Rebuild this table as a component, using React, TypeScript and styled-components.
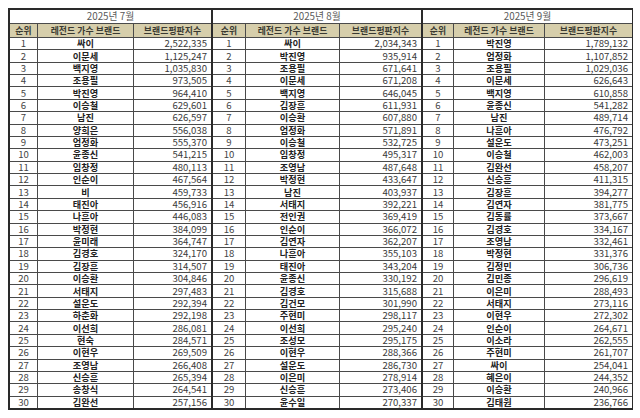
import React from "react";
import styled, { createGlobalStyle } from "styled-components";

interface IEntry {
  name: string;
  score: string;
}

interface IMonth {
  cols: string;
  entries: IEntry[];
  title: string;
  width: number;
}

const toEntries = (raw: string): IEntry[] =>
  raw
    .trim()
    .split("\n")
    .map((line: string): IEntry => {
      const [name, score] = line.trim().split(" ");
      return { name, score };
    });

const months: IMonth[] = [
  {
    cols: "27px 95px 1fr",
    entries: toEntries(`
      싸이 2,522,335
      이문세 1,125,247
      백지영 1,035,830
      조용필 973,505
      박진영 964,410
      이승철 629,601
      남진 626,597
      양희은 556,038
      엄정화 555,370
      윤종신 541,215
      임창정 480,113
      인순이 467,564
      비 459,733
      태진아 456,916
      나훈아 446,083
      박정현 384,099
      윤미래 364,747
      김경호 324,170
      김장훈 314,507
      이승환 304,846
      서태지 297,483
      설운도 292,394
      하춘화 292,198
      이선희 286,081
      현숙 284,571
      이현우 269,509
      조영남 266,408
      신승훈 265,394
      송창식 264,541
      김완선 257,156
    `),
    title: "2025년 7월",
    width: 204,
  },
  {
    cols: "32px 93px 1fr",
    entries: toEntries(`
      싸이 2,034,343
      박진영 935,914
      조용필 671,641
      이문세 671,208
      백지영 646,045
      김장훈 611,931
      이승환 607,880
      엄정화 571,891
      이승철 532,725
      임창정 495,317
      조영남 487,648
      박정현 433,647
      남진 403,937
      서태지 392,221
      전인권 369,419
      인순이 366,072
      김연자 362,207
      나훈아 355,103
      태진아 343,204
      윤종신 330,192
      김경호 315,688
      김건모 301,990
      주현미 298,117
      이선희 295,240
      조성모 295,175
      이현우 288,366
      설운도 286,730
      이은미 278,914
      신승훈 273,406
      윤수일 270,337
    `),
    title: "2025년 8월",
    width: 210,
  },
  {
    cols: "30px 90px 1fr",
    entries: toEntries(`
      박진영 1,789,132
      엄정화 1,107,852
      조용필 1,029,036
      이문세 626,643
      백지영 610,858
      윤종신 541,282
      남진 489,714
      나훈아 476,792
      설운도 473,251
      이승철 462,003
      김완선 458,207
      신승훈 411,315
      김장훈 394,277
      김연자 381,775
      김동률 373,667
      김경호 334,167
      조영남 332,461
      박정현 331,376
      김정민 306,736
      김민종 296,619
      이은미 288,493
      서태지 273,116
      이현우 272,302
      인순이 264,671
      이소라 262,555
      주현미 261,707
      싸이 254,041
      혜은이 244,352
      이승환 240,966
      김태원 236,766
    `),
    title: "2025년 9월",
    width: 211,
  },
];

const GlobalStyle = createGlobalStyle`
  html, body {
    margin: 0;
    padding: 0;
    background: #ffffff;
  }
  body {
    font-family: "Noto Sans CJK KR", "Noto Sans", sans-serif;
  }
`;

const Page = styled.div`
  padding: 8px;
`;

const Board = styled.div`
  display: flex;
  width: 625px;
  height: 402px;
  box-sizing: border-box;
  border: 2px solid #2a2a2a;
  background: #2a2a2a;
  gap: 2px;
`;

// each month is its own grid; the 1px gaps show the dark background as rules
const MonthTable = styled.div<{ $cols: string; $width: number }>`
  display: grid;
  flex: 0 0 auto;
  width: ${(p) => p.$width - 2}px;
  grid-template-columns: ${(p) => p.$cols};
  grid-template-rows: 13px 13px repeat(30, 1fr);
  gap: 1px;
  background: #4a4a4a;
  &:first-child {
    width: ${(p) => p.$width - 3}px;
  }
`;

const Cell = styled.div`
  display: flex;
  align-items: center;
  background: #ffffff;
  font-size: 9.6px;
  line-height: 11px;
  color: #333333;
  white-space: nowrap;
`;

const MonthTitle = styled(Cell)`
  grid-column: 1 / -1;
  justify-content: center;
  color: #5a5a5a;
  font-size: 9.8px;
`;

const HeadCell = styled(Cell)`
  justify-content: center;
  background: #d6ceab;
  font-weight: 700;
  font-size: 8.8px;
  color: #3a3a32;
  letter-spacing: 0.1px;
`;

const RankCell = styled(Cell)`
  justify-content: center;
  color: #444444;
`;

const NameCell = styled(Cell)`
  justify-content: center;
  font-weight: 700;
  font-size: 9.2px;
  color: #222222;
`;

const ScoreCell = styled(Cell)`
  justify-content: flex-end;
  padding-right: 4px;
  color: #3a3a3a;
`;

const App: React.FC = (): JSX.Element => (
  <Page>
    <GlobalStyle />
    <Board>
      {months.map((month: IMonth) => (
        <MonthTable $cols={month.cols} $width={month.width} key={month.title}>
          <MonthTitle>{month.title}</MonthTitle>
          <HeadCell>{"순위"}</HeadCell>
          <HeadCell>{"레전드 가수 브랜드"}</HeadCell>
          <HeadCell>{"브랜드평판지수"}</HeadCell>
          {month.entries.map((entry: IEntry, index: number) => (
            <React.Fragment key={`${month.title}-${entry.name}`}>
              <RankCell>{index + 1}</RankCell>
              <NameCell>{entry.name}</NameCell>
              <ScoreCell>{entry.score}</ScoreCell>
            </React.Fragment>
          ))}
        </MonthTable>
      ))}
    </Board>
  </Page>
);

export default App;
